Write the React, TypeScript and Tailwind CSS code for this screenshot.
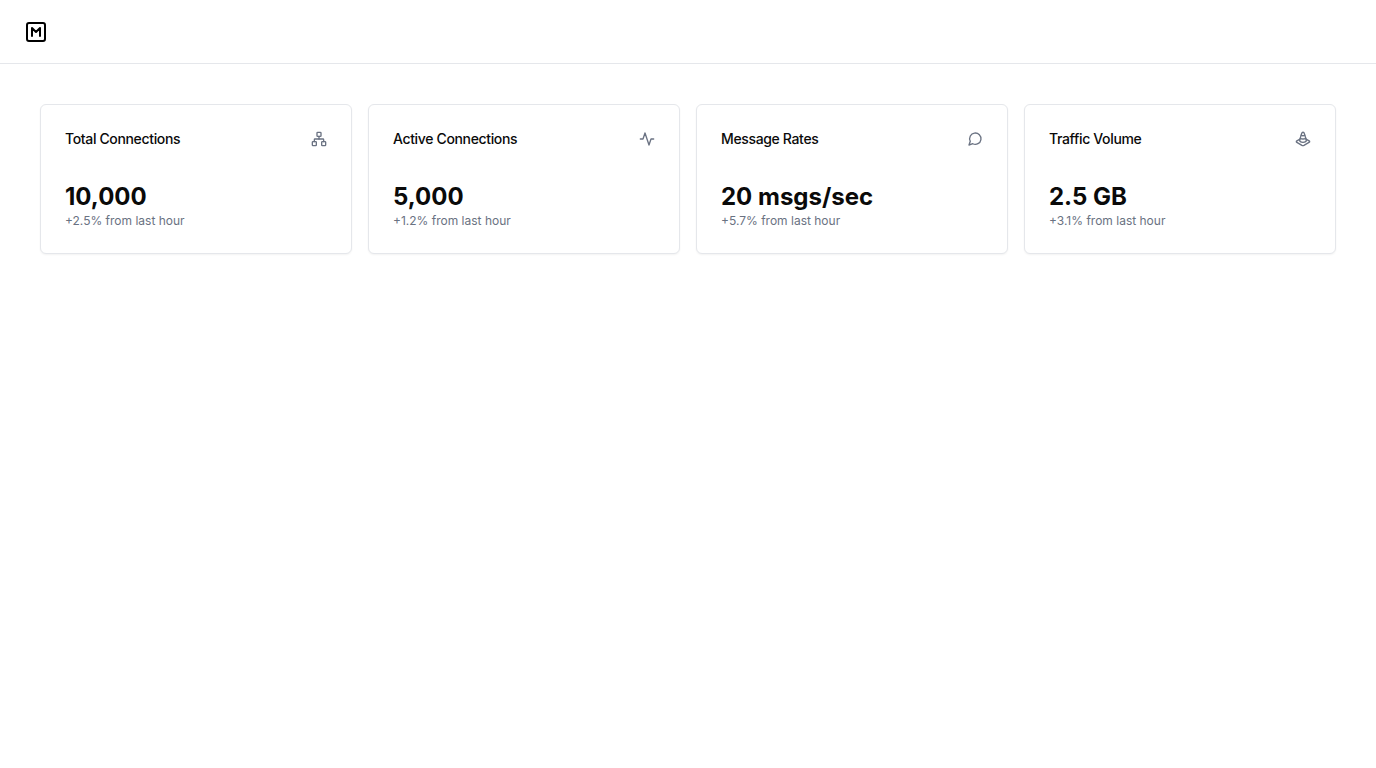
import type { ReactNode } from "react";

type Stat = { title: string; value: string; change: string; icon: ReactNode };

function Icon({ className, children }: { className: string; children: ReactNode }) {
  return (
    <svg
      className={className}
      viewBox="0 0 24 24"
      fill="none"
      stroke="currentColor"
      strokeWidth="2"
      strokeLinecap="round"
      strokeLinejoin="round"
      aria-hidden="true"
    >
      {children}
    </svg>
  );
}

const stats: Stat[] = [
  {
    title: "Total Connections",
    value: "10,000",
    change: "+2.5% from last hour",
    icon: (
      <>
        <rect x="16" y="16" width="6" height="6" rx="1" />
        <rect x="2" y="16" width="6" height="6" rx="1" />
        <rect x="9" y="2" width="6" height="6" rx="1" />
        <path d="M5 16v-3a1 1 0 0 1 1-1h12a1 1 0 0 1 1 1v3" />
        <path d="M12 12V8" />
      </>
    ),
  },
  {
    title: "Active Connections",
    value: "5,000",
    change: "+1.2% from last hour",
    icon: <path d="M22 12h-4l-3 9L9 3l-3 9H2" />,
  },
  {
    title: "Message Rates",
    value: "20 msgs/sec",
    change: "+5.7% from last hour",
    icon: <path d="m3 21 1.9-5.7a8.5 8.5 0 1 1 3.8 3.8z" />,
  },
  {
    title: "Traffic Volume",
    value: "2.5 GB",
    change: "+3.1% from last hour",
    icon: (
      <>
        <path d="M9.3 6.2a4.55 4.55 0 0 0 5.4 0" />
        <path d="M7.9 10.7c.9.8 2.4 1.3 4.1 1.3s3.2-.5 4.1-1.3" />
        <path d="M13.9 3.5a1.93 1.93 0 0 0-3.8-.1l-3 10c-.1.2-.1.4-.1.6 0 1.7 2.2 3 5 3s5-1.3 5-3c0-.2 0-.4-.1-.5Z" />
        <path d="m7.5 12.2-4.7 2.7c-.5.3-.8.7-.8 1.1s.3.8.8 1.1l7.6 4.5c.9.5 2.1.5 3 0l7.6-4.5c.7-.3 1-.7 1-1.1s-.3-.8-.8-1.1l-4.7-2.8" />
      </>
    ),
  },
];

function StatCard({ title, value, change, icon }: Stat) {
  return (
    <section className="rounded-md border border-gray-200 bg-white text-neutral-950 shadow-xs">
      <div className="flex items-center justify-between p-6 pb-2">
        <h3 className="text-sm font-medium tracking-tight">{title}</h3>
        <Icon className="h-4 w-4 text-gray-500">{icon}</Icon>
      </div>
      <div className="p-6">
        <div className="text-2xl font-bold">{value}</div>
        <p className="text-xs text-gray-500">{change}</p>
      </div>
    </section>
  );
}

export default function App() {
  return (
    <div className="flex min-h-screen flex-col bg-white font-['Inter',sans-serif] text-black">
      <header className="flex h-16 items-center border-b border-gray-200 px-6">
        <a href="#" aria-label="Home">
          <Icon className="h-6 w-6">
            <rect width="18" height="18" x="3" y="3" rx="2" />
            <path d="M8 16V8l4 4 4-4v8" />
          </Icon>
        </a>
      </header>
      <main className="grid flex-1 grid-cols-1 content-start gap-4 p-10 md:grid-cols-2 lg:grid-cols-4">
        {stats.map((stat) => (
          <StatCard key={stat.title} {...stat} />
        ))}
      </main>
    </div>
  );
}
